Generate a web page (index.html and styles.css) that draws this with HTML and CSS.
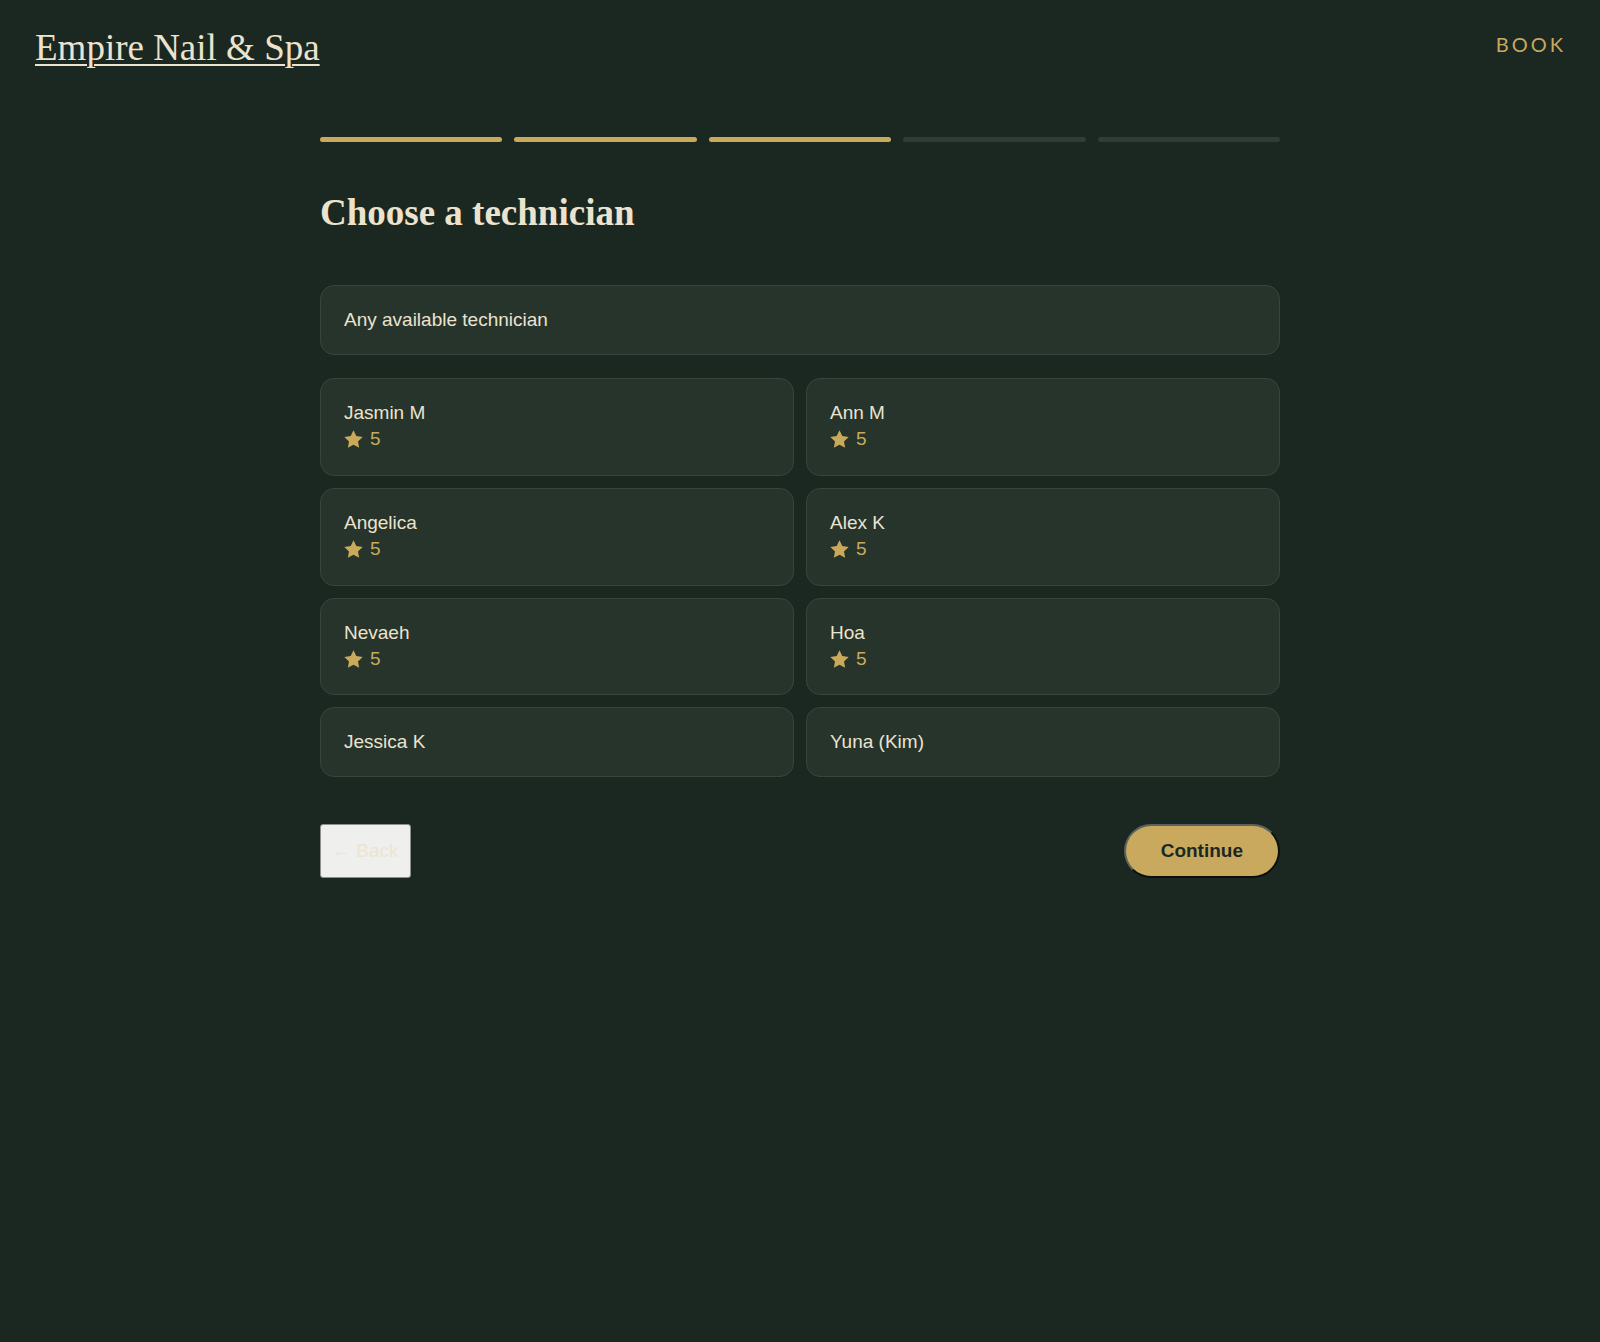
FILE: index.html
```html
<!DOCTYPE html>
<html lang="en">
<head>
  <meta charset="UTF-8">
  <meta name="viewport" content="width=device-width, initial-scale=1.0">
  <title>Book – Empire Nail &amp; Spa</title>
  <link rel="stylesheet" href="styles.css">
</head>
<body>

  <header class="site-header">
    <a class="logo" href="#">Empire Nail &amp; Spa</a>
    <a class="nav-link" href="#">BOOK</a>
  </header>

  <main class="booking">
    <!-- step 3 of 5 -->
    <div class="steps">
      <span class="step done"></span>
      <span class="step done"></span>
      <span class="step done"></span>
      <span class="step"></span>
      <span class="step"></span>
    </div>

    <h1 class="step-title">Choose a technician</h1>

    <div class="option any">Any available technician</div>

    <div class="tech-grid">
      <div class="option">
        <div class="tech-name">Jasmin M</div>
        <div class="rating"><svg class="star" viewBox="1.6 1.6 20.8 20"><path d="M12 1.8l3.1 6.6 7.1.9-5.2 5 1.3 7.1L12 18l-6.3 3.4L7 14.3l-5.2-5 7.1-.9z"/></svg>5</div>
      </div>
      <div class="option">
        <div class="tech-name">Ann M</div>
        <div class="rating"><svg class="star" viewBox="1.6 1.6 20.8 20"><path d="M12 1.8l3.1 6.6 7.1.9-5.2 5 1.3 7.1L12 18l-6.3 3.4L7 14.3l-5.2-5 7.1-.9z"/></svg>5</div>
      </div>
      <div class="option">
        <div class="tech-name">Angelica</div>
        <div class="rating"><svg class="star" viewBox="1.6 1.6 20.8 20"><path d="M12 1.8l3.1 6.6 7.1.9-5.2 5 1.3 7.1L12 18l-6.3 3.4L7 14.3l-5.2-5 7.1-.9z"/></svg>5</div>
      </div>
      <div class="option">
        <div class="tech-name">Alex K</div>
        <div class="rating"><svg class="star" viewBox="1.6 1.6 20.8 20"><path d="M12 1.8l3.1 6.6 7.1.9-5.2 5 1.3 7.1L12 18l-6.3 3.4L7 14.3l-5.2-5 7.1-.9z"/></svg>5</div>
      </div>
      <div class="option">
        <div class="tech-name">Nevaeh</div>
        <div class="rating"><svg class="star" viewBox="1.6 1.6 20.8 20"><path d="M12 1.8l3.1 6.6 7.1.9-5.2 5 1.3 7.1L12 18l-6.3 3.4L7 14.3l-5.2-5 7.1-.9z"/></svg>5</div>
      </div>
      <div class="option">
        <div class="tech-name">Hoa</div>
        <div class="rating"><svg class="star" viewBox="1.6 1.6 20.8 20"><path d="M12 1.8l3.1 6.6 7.1.9-5.2 5 1.3 7.1L12 18l-6.3 3.4L7 14.3l-5.2-5 7.1-.9z"/></svg>5</div>
      </div>
      <div class="option">
        <div class="tech-name">Jessica K</div>
      </div>
      <div class="option">
        <div class="tech-name">Yuna (Kim)</div>
      </div>
    </div>

    <div class="actions">
      <button class="btn-back">← Back</button>
      <button class="btn-continue">Continue</button>
    </div>
  </main>

</body>
</html>
```

FILE: styles.css
```css
body {
  margin: 0;
  background-color: #1b2822;
  color: #ece3cf;
  font-family: 'Liberation Sans', Arial, sans-serif;
  min-height: 100vh;
}

.site-header {
  display: flex;
  justify-content: space-between;
  align-items: center;
  padding: 18px 34px 0 35px;
}

.logo {
  font-family: 'Liberation Serif', 'Times New Roman', serif;
  font-size: 37px;
  margin-top: 8px;
  color: #ece3cf;
  text-decoration: underline;
  text-decoration-thickness: 2px;
  text-underline-offset: 4px;
}

.nav-link {
  font-family: Lato, 'Open Sans', sans-serif;
  font-size: 20px;
  letter-spacing: 3px;
  color: #c9a95c;
  text-decoration: none;
}

.booking {
  width: 960px;
  margin: 0 auto;
  padding-top: 68px;
}

.steps {
  display: grid;
  grid-template-columns: repeat(5, 1fr);
  gap: 12px;
}

.step {
  height: 5px;
  border-radius: 3px;
  background-color: #2f3d35;
}

.step.done {
  background-color: #c9a95c;
}

.step-title {
  font-family: 'Liberation Serif', 'Times New Roman', serif;
  font-size: 37px;
  font-weight: 700;
  color: #ece3cf;
  margin: 49px 0 51px;
}

.option {
  background-color: #26342c;
  border: 1px solid #39453a;
  border-radius: 14px;
  padding: 23px 23px;
  font-size: 19px;
  line-height: 1.15;
  color: #ece3cf;
}

.tech-grid {
  display: grid;
  grid-template-columns: 1fr 1fr;
  gap: 12px;
  margin-top: 23px;
}

.rating {
  display: flex;
  align-items: center;
  gap: 7px;
  height: 25px;
  margin-top: 3px;
  color: #c9a95c;
}

.star {
  width: 19px;
  height: 18px;
  fill: #c9a95c;
}

.actions {
  display: flex;
  justify-content: space-between;
  align-items: center;
  margin-top: 47px;
}

.btn-back {
  font-family: 'Liberation Sans', Arial, sans-serif;
  font-size: 19px;
  color: #ece5d2;
  background-color: #efefed;
  border: 1px solid #8d8f8c;
  border-radius: 3px;
  padding: 15px 11px;
  height: 54px;
  cursor: pointer;
}

.btn-continue {
  font-family: 'Liberation Sans', Arial, sans-serif;
  font-size: 19px;
  font-weight: 700;
  color: #1b2822;
  background-color: #c9a95e;
  border: 2px solid;
  border-color: #5e625e #0c0f0d #0c0f0d #5e625e;
  border-radius: 28px;
  padding: 0 35px;
  height: 54px;
  cursor: pointer;
}
```
